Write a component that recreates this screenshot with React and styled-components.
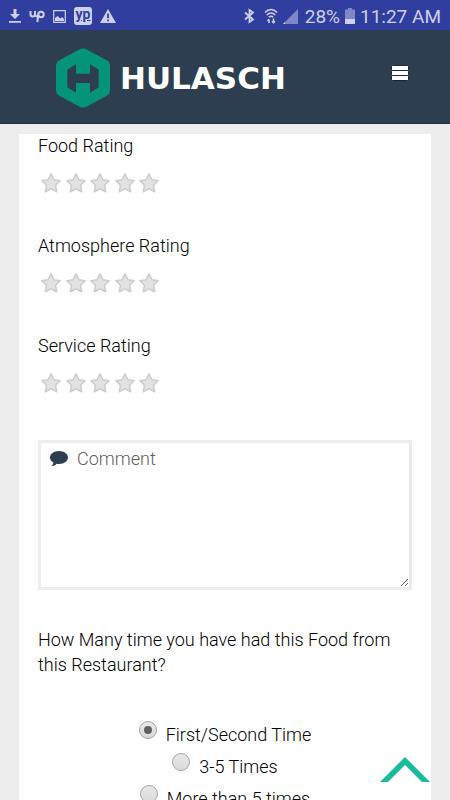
import { useState } from "react";
import styled, { createGlobalStyle } from "styled-components";

const ratings = ["Food Rating", "Atmosphere Rating", "Service Rating"];
const visits = ["First/Second Time", "3-5 Times", "More than 5 times"];

const StatusBar = () => (
	<Status>
		<StatusGroup>
			<svg width="12" height="14" viewBox="0 0 12 14" fill="currentColor">
				<path d="M4.500 0h3v5H11L6 10 1 5h3.500zM0 12h12v1.800H0z" />
			</svg>
			<UpMark>
				<svg width="16" height="13" viewBox="0 0 16 13" fill="none" stroke="currentColor" strokeWidth="2">
					<path d="M1.500 1v3.300a2.200 2.200 0 0 0 4.500 0V1M6 4.500c.5 2 2.500 2.500 3.500 1" />
					<circle cx="12" cy="4.500" r="2.700" />
					<path d="M9.300 4.500L8.300 12" />
				</svg>
			</UpMark>
			<svg width="13" height="13" viewBox="0 0 13 13">
				<path d="M.7.7h11.600v11.600H.7z" fill="none" stroke="currentColor" strokeWidth="1.200" />
				<path d="M2 11V8l2.500-2 3 2.500L9 7l2 2v2z" fill="currentColor" />
			</svg>
			<YpMark>yp</YpMark>
			<svg width="16" height="14" viewBox="0 0 16 14">
				<path d="M8 0l8 14H0z" fill="currentColor" />
				<path d="M7.200 4.500h1.700v4.700H7.200zM7.200 10.500h1.700v1.700H7.200z" fill="#303f9f" />
			</svg>
		</StatusGroup>
		<StatusGroup $tight>
			<svg width="11" height="16" viewBox="0 0 11 16" fill="none" stroke="currentColor" strokeWidth="1.800">
				<path d="M1 4.500l8 7L5.500 14V2L9 4.500l-8 7" />
			</svg>
			<WifiIcon width="14" height="16" viewBox="0 0 14 16" fill="none" stroke="currentColor" strokeWidth="1.500">
				<path d="M1 4.500C4.500.5 9.500.5 13 4.500M2.800 7c2.500-2.800 6-2.800 8.400 0M4.800 9.300c1.500-1.500 3-1.500 4.400 0" />
				<path d="M5 15v-3.500M3.500 13L5 11.200M9.500 10.500V15M8 13.200l1.500 1.500 1.500-1.500" />
			</WifiIcon>
			<svg width="15" height="15" viewBox="0 0 15 15" fill="currentColor">
				<path d="M15 0v15H0z" opacity=".5" />
				<path d="M2 13v2H0z" />
			</svg>
			<Battery>28%</Battery>
			<svg width="10" height="16" viewBox="0 0 10 16" fill="currentColor">
				<path d="M3 0h4v1.500h3V11H0V1.500h3z" opacity=".5" />
				<path d="M0 11h10v5H0z" />
			</svg>
			<span>11:27 AM</span>
		</StatusGroup>
	</Status>
);

const Star = () => (
	<svg width="20" height="20" viewBox="0 0 18 18">
		<path
			d="M9 .8l2.600 5.300 5.600.8-4.100 4.100 1 5.900L9 14.200l-5.100 2.700 1-5.900L.8 6.900l5.600-.8z"
			fill="#e2e3e1"
			stroke="#cdcdcd"
			strokeWidth="1.400"
			strokeLinejoin="round"
		/>
	</svg>
);

const Rating = ({ label }) => (
	<RatingField>
		<RatingLabel>{label}</RatingLabel>
		<Stars>
			{[1, 2, 3, 4, 5].map((n) => (
				<StarLabel key={n}>
					<HiddenRadio type="radio" name={label} value={n} aria-label={`${n} stars`} />
					<Star />
				</StarLabel>
			))}
		</Stars>
	</RatingField>
);

const App = () => {
	const [visit, setVisit] = useState(visits[0]);

	return (
		<Screen>
			<GlobalStyle />
			<StatusBar />
			<Header>
				<Logo href="#home">
					<svg width="54" height="60" viewBox="0 0 162 178">
						<path
							d="M68 4q13-7 26 0l58 32q10 6 10 17v72q0 11-10 17l-58 32q-13 7-26 0l-58-32q-10-6-10-17V53q0-11 10-17z"
							fill="#049477"
						/>
						<path
							d="M34 64l26-16v28h42V48l26 16v53l-26 16v-29H60v29l-26-16z"
							fill="#2c3e50"
						/>
					</svg>
					<LogoName>HULASCH</LogoName>
				</Logo>
				<MenuButton aria-label="Menu">
					<svg width="18" height="16" viewBox="0 0 18 16" fill="#fff" stroke="#12263c">
						<rect x=".5" y=".5" width="17" height="5" rx="1" />
						<rect x=".5" y="5.500" width="17" height="5" rx="1" />
						<rect x=".5" y="10.500" width="17" height="5" rx="1" />
					</svg>
				</MenuButton>
			</Header>
			<Main>
				<Card>
					{ratings.map((label) => (
						<Rating key={label} label={label} />
					))}
					<CommentBox>
						<CommentIcon width="18" height="16" viewBox="0 0 18 16" fill="#2c3e50">
							<path d="M9 0c5 0 9 2.900 9 6.500S14 13 9 13c-.8 0-1.500-.1-2.200-.2C5.300 14.200 3.700 15 1.500 15.300c1-1 1.700-2 2-3.700C1.300 10.400 0 8.600 0 6.500 0 2.900 4 0 9 0z" />
						</CommentIcon>
						<CommentInput placeholder="Comment" aria-label="Comment" />
					</CommentBox>
					<Visits>
						<Question>How Many time you have had this Food from this Restaurant?</Question>
						{visits.map((item) => (
							<Option key={item}>
								<Radio
									type="radio"
									name="visits"
									checked={visit === item}
									onChange={() => setVisit(item)}
								/>
								{item}
							</Option>
						))}
					</Visits>
				</Card>
			</Main>
			<TopLink href="#top" aria-label="Back to top">
				<svg width="50" height="26" viewBox="0 0 50 26">
					<path d="M25 0l25 25h-8L25 8 8 25H0z" fill="#18bc9c" />
				</svg>
			</TopLink>
		</Screen>
	);
};

const GlobalStyle = createGlobalStyle`
	* {
		box-sizing: border-box;
	}
	body {
		margin: 0;
		background-color: #ededed;
		color: #000;
		font-family: Roboto, "Liberation Sans", sans-serif;
		font-size: 18px;
		font-weight: 300;
		line-height: 25px;
	}
`;

const Screen = styled.div`
	height: 100vh;
	display: flex;
	flex-direction: column;
	overflow: hidden;
`;

const Status = styled.div`
	display: flex;
	flex: none;
	justify-content: space-between;
	align-items: center;
	height: 30px;
	padding: 2px 9px 0;
	background-color: #303f9f;
	color: #cdd0ea;
`;

const StatusGroup = styled.div`
	display: flex;
	align-items: center;
	gap: ${({ $tight }) => ($tight ? "5px" : "8px")};
	font-size: 19px;
	font-weight: 400;
`;

const UpMark = styled.span`
	display: flex;
`;

const YpMark = styled.span`
	width: 18px;
	height: 18px;
	border-radius: 3px;
	background-color: #cdd0ea;
	color: #303f9f;
	font-size: 14px;
	font-weight: 700;
	line-height: 15px;
	text-align: center;
	text-decoration: underline;
`;

const WifiIcon = styled.svg`
	margin-left: 4px;
`;

const Battery = styled.span`
	margin-left: 2px;
`;

const Header = styled.header`
	display: flex;
	flex: none;
	justify-content: space-between;
	align-items: center;
	height: 94px;
	padding: 0 41px 0 56px;
	background-color: #2c3e50;
	border-bottom: 1px solid #1e3246;
`;

const Logo = styled.a`
	display: flex;
	align-items: center;
	gap: 10px;
	margin-top: 2px;
	color: #fff;
	text-decoration: none;
`;

const LogoName = styled.span`
	font-family: "DejaVu Sans", sans-serif;
	font-size: 31px;
	font-weight: 700;
	line-height: 30px;
`;

const MenuButton = styled.button`
	display: flex;
	margin-bottom: 8px;
	padding: 0;
	border: none;
	background: none;
	cursor: pointer;
`;

const Main = styled.main`
	flex: 1;
	min-height: 0;
	padding: 10px 19px 0;
	overflow-y: auto;
	scrollbar-width: none;
`;

const Card = styled.form`
	padding: 0 19px 40px;
	background-color: #fff;
`;

const RatingField = styled.fieldset`
	margin: 0 0 41px;
	padding: 0;
	border: none;
`;

const RatingLabel = styled.legend`
	padding: 0;
	line-height: 23px;
`;

const Stars = styled.div`
	display: flex;
	justify-content: space-between;
	width: 118px;
	margin: 16px 0 0 3px;
`;

const StarLabel = styled.label`
	display: flex;
	position: relative;
	cursor: pointer;
`;

const HiddenRadio = styled.input`
	position: absolute;
	inset: 0;
	margin: 0;
	opacity: 0;
`;

const CommentBox = styled.div`
	display: flex;
	position: relative;
	margin-top: 47px;
`;

const CommentIcon = styled.svg`
	position: absolute;
	top: 11px;
	left: 12px;
`;

const CommentInput = styled.textarea`
	width: 100%;
	height: 150px;
	padding: 3px 10px 3px 36px;
	border: 3px solid #ededed;
	background: none;
	font: inherit;
	outline: none;
	resize: both;

	&::placeholder {
		color: #606060;
	}
`;

const Visits = styled.fieldset`
	display: flex;
	flex-direction: column;
	align-items: center;
	margin: 37px 0 0;
	padding: 0;
	border: none;
`;

const Question = styled.legend`
	margin-bottom: 41px;
	padding: 0;
`;

const Option = styled.label`
	display: flex;
	align-items: center;
	gap: 9px;
	height: 32px;
`;

const Radio = styled.input`
	display: grid;
	place-items: center;
	appearance: none;
	width: 18px;
	height: 18px;
	margin: 0 0 8px;
	border: 1px solid #a5a5a5;
	border-radius: 50%;
	background: linear-gradient(#e8e8e8, #dadada);

	&:checked::before {
		content: "";
		width: 8px;
		height: 8px;
		border-radius: 50%;
		background-color: #606060;
	}
`;

const TopLink = styled.a`
	display: flex;
	position: fixed;
	right: 20px;
	bottom: 17px;
`;

export default App;
